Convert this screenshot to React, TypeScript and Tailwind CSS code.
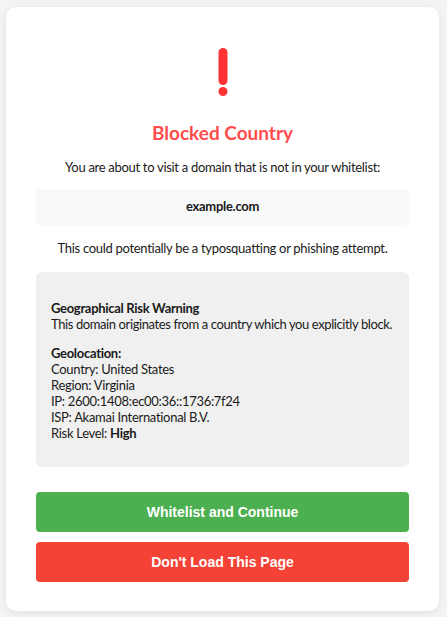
// Blocked-country interstitial: warning card with geo details and two actions.
const sans = "font-['Segoe_UI',Lato,sans-serif]";

export default function App() {
  return (
    <div className={`min-h-screen bg-[#f3f4f6] pt-[7px] pl-[6px] ${sans}`}>
      <div className="w-[433px] rounded-[10px] bg-white px-[30px] pt-[41px] pb-[29px] shadow-[0_2px_8px_rgba(0,0,0,0.08)] text-[13px] tracking-[-0.3px] text-[#1a1a1a]">
        {/* Icon */}
        <div className="flex justify-center">
          <svg width="10" height="48" viewBox="0 0 10 48">
            <rect x="0.5" y="0" width="9" height="37" rx="4.5" fill="#ff3333" />
            <circle cx="5" cy="43.5" r="4.5" fill="#ff3333" />
          </svg>
        </div>

        <h1 className="mt-[24px] text-center text-[19px] font-bold leading-[26px] tracking-normal text-[#ff4d4d]">
          Blocked Country
        </h1>

        <p className="mt-[13px] text-center leading-[16px]">
          You are about to visit a domain that is not in your whitelist:
        </p>

        <div className="mt-[14px] flex h-[36px] items-center justify-center rounded-[4px] bg-[#f8f9fa] font-bold">
          example.com
        </div>

        <p className="mt-[15px] text-center leading-[16px]">
          This could potentially be a typosquatting or phishing attempt.
        </p>

        <div className="mt-[16px] rounded-[6px] bg-[#f0f0f0] px-[15px] pt-[28px] pb-[26px] leading-[16px]">
          <p className="font-bold">Geographical Risk Warning</p>
          <p className="whitespace-nowrap tracking-[-0.4px]">
            This domain originates from a country which you explicitly block.
          </p>

          <p className="mt-[13px] font-bold">Geolocation:</p>
          <p>Country: United States</p>
          <p>Region: Virginia</p>
          <p>IP: 2600:1408:ec00:36::1736:7f24</p>
          <p>ISP: Akamai International B.V.</p>
          <p>
            Risk Level: <span className="font-bold">High</span>
          </p>
        </div>

        <div className="mt-[25px] flex flex-col gap-[10px] font-['Liberation_Sans',Arial,sans-serif] text-[14px] font-bold tracking-normal text-white">
          <button className="h-[40px] rounded-[4px] bg-[#4caf50]">Whitelist and Continue</button>
          <button className="h-[40px] rounded-[4px] bg-[#f44336]">Don't Load This Page</button>
        </div>
      </div>
    </div>
  );
}
